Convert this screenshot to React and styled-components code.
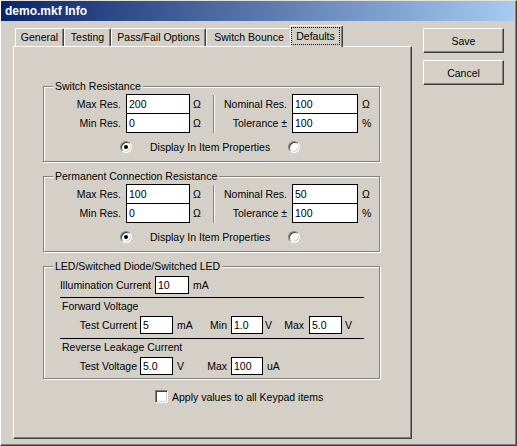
import React from "react";
import styled, { createGlobalStyle } from "styled-components";

const GlobalStyle = createGlobalStyle`
  html, body {
    margin: 0;
    padding: 0;
    background: #d4d0c8;
  }
  body {
    font-family: "Liberation Sans", Arial, sans-serif;
    font-size: 10.5px;
    color: #000;
  }
`;

const Window = styled.div`
  box-sizing: border-box;
  width: 517px;
  height: 446px;
  background: #d4d0c8;
  border-top: 1px solid #e4e2dc;
  border-left: 1px solid #fff;
  border-right: 1px solid #404040;
  border-bottom: 1px solid #404040;
  box-shadow: inset -1px -1px 0 #808080;
  padding-right: 2px;
  display: flex;
  flex-direction: column;
`;

const TitleBar = styled.div`
  height: 20px;
  display: flex;
  align-items: center;
  padding-left: 4px;
  background: linear-gradient(to right, #0a246a, #a6caf0);
  color: #fff;
  font-weight: bold;
  font-size: 12px;
`;

const Body = styled.div`
  display: flex;
  align-items: flex-start;
  padding: 4px 0 0 12px;
`;

const TabControl = styled.div`
  display: flex;
  flex-direction: column;
  width: 399px;
`;

const TabStrip = styled.div`
  display: flex;
  align-items: flex-end;
  height: 21px;
  padding-left: 2px;
`;

const Tab = styled.div`
  box-sizing: border-box;
  position: relative;
  width: ${(p) => p.$w}px;
  height: ${(p) => (p.$active ? 22 : 18)}px;
  margin: ${(p) => (p.$active ? "0 -2px -1px -2px" : "0")};
  padding: ${(p) => (p.$active ? "1px 1px 2px 0" : "0 0 1px 0")};
  z-index: ${(p) => (p.$active ? 1 : 0)};
  display: flex;
  align-items: center;
  justify-content: center;
  background: #d4d0c8;
  border-left: 1px solid #fff;
  border-top: 1px solid #fff;
  border-right: 1px solid #404040;
  border-radius: 2px 2px 0 0;
  box-shadow: inset -1px 0 0 #808080;
  white-space: nowrap;
`;

const FocusRing = styled.span`
  flex: 1;
  align-self: stretch;
  display: flex;
  align-items: center;
  justify-content: center;
  border: 1px dotted #000;
  margin-right: 1px;
`;

const Panel = styled.div`
  box-sizing: border-box;
  width: 399px;
  height: 393px;
  border-left: 1px solid #fff;
  border-top: 1px solid #fff;
  border-right: 1px solid #404040;
  border-bottom: 1px solid #404040;
  box-shadow: inset -1px -1px 0 #808080;
  padding: 39px 0 0 29px;
`;

const Group = styled.div`
  box-sizing: border-box;
  position: relative;
  width: 337px;
  height: ${(p) => p.$h}px;
  border: 1px solid #808080;
  box-shadow: inset 1px 1px 0 #fff, 1px 1px 0 #fff;

  & + & {
    margin-top: 14px;
  }
`;

const GroupTitle = styled.span`
  position: absolute;
  top: -7px;
  left: 9px;
  padding: 0 2px;
  line-height: 13px;
  background: #d4d0c8;
  white-space: nowrap;
`;

const ResGrid = styled.div`
  display: grid;
  grid-template-columns: 82px 64px 23px 2px 77px 66px 1fr;
  grid-template-rows: 19px 20px;
  padding-top: 7px;
`;

const Label = styled.span`
  box-sizing: border-box;
  width: ${(p) => (p.$w ? `${p.$w}px` : "auto")};
  flex: none;
  text-align: right;
  padding-right: ${(p) => p.$pad ?? 5}px;
  white-space: nowrap;
  align-self: center;
`;

const Unit = styled.span`
  box-sizing: border-box;
  width: ${(p) => (p.$w ? `${p.$w}px` : "auto")};
  flex: none;
  padding-left: ${(p) => p.$pad ?? 3}px;
  white-space: nowrap;
  align-self: center;
`;

const TextBox = styled.input`
  box-sizing: border-box;
  width: ${(p) => (p.$w ? `${p.$w}px` : "100%")};
  height: ${(p) => p.$h ?? 20}px;
  flex: none;
  margin: 0;
  padding: 0 0 0 2px;
  border: 1px solid #000;
  background: #fff;
  font: inherit;
  color: #000;
  outline: none;
  align-self: start;
`;

const VSeparator = styled.div`
  grid-column: 4;
  grid-row: 1 / span 2;
  margin-top: 1px;
  height: 38px;
  border-left: 1px solid #808080;
  border-right: 1px solid #fff;
  box-sizing: border-box;
`;

const RadioRow = styled.div`
  display: flex;
  align-items: center;
  gap: 18px;
  height: 13px;
  margin-top: 7px;
  padding-left: 76px;
`;

const Radio = styled.span`
  box-sizing: border-box;
  position: relative;
  width: 12px;
  height: 12px;
  border-radius: 50%;
  border: 1px solid;
  border-color: #808080 #fff #fff #808080;
  background: #fff;
  box-shadow: inset 1px 1px 0 #404040, inset -1px -1px 0 #d4d0c8;

  &::after {
    content: "";
    display: ${(p) => (p.$checked ? "block" : "none")};
    position: absolute;
    left: 3px;
    top: 3px;
    width: 4px;
    height: 4px;
    border-radius: 50%;
    background: #000;
  }
`;

const LedBody = styled.div`
  display: flex;
  flex-direction: column;
  padding-top: 9px;
`;

const FieldRow = styled.div`
  display: flex;
  align-items: center;
  height: 18px;
  margin-top: ${(p) => p.$mt ?? 0}px;
`;

const Rule = styled.div`
  height: 1px;
  background: #000;
  margin: ${(p) => p.$mt}px 15px 0 16px;
`;

const Heading = styled.div`
  line-height: 13px;
  margin-top: 2px;
  padding-left: 18px;
`;

const ApplyRow = styled.label`
  display: flex;
  align-items: center;
  gap: 4px;
  margin-top: 11px;
  padding-left: 112px;
`;

const CheckBox = styled.span`
  box-sizing: border-box;
  width: 13px;
  height: 13px;
  border: 1px solid;
  border-color: #808080 #fff #fff #808080;
  background: #fff;
  box-shadow: inset 1px 1px 0 #404040, inset -1px -1px 0 #d4d0c8;
`;

const ButtonColumn = styled.div`
  display: flex;
  flex-direction: column;
  gap: 7px;
  margin: 3px 0 0 11px;
`;

const Button = styled.button`
  box-sizing: border-box;
  width: 81px;
  height: 25px;
  padding: 0;
  background: #d4d0c8;
  border-left: 1px solid #fff;
  border-top: 1px solid #fff;
  border-right: 1px solid #404040;
  border-bottom: 1px solid #404040;
  box-shadow: inset -1px -1px 0 #808080;
  font: inherit;
  color: #000;
`;

const tabs = [
  { name: "General", w: 49 },
  { name: "Testing", w: 47 },
  { name: "Pass/Fail Options", w: 95 },
  { name: "Switch Bounce", w: 86 },
  { name: "Defaults", w: 53, active: true },
];

function ResistanceGroup({ title, max, min, nominal, tolerance }) {
  return (
    <Group $h={76}>
      <GroupTitle>{title}</GroupTitle>
      <ResGrid>
        <Label>Max Res.</Label>
        <TextBox readOnly defaultValue={max} />
        <Unit>Ω</Unit>
        <VSeparator />
        <Label>Nominal Res.</Label>
        <TextBox readOnly defaultValue={nominal} />
        <Unit $pad={4}>Ω</Unit>
        <Label style={{ gridColumn: 1 }}>Min Res.</Label>
        <TextBox readOnly defaultValue={min} />
        <Unit>Ω</Unit>
        <Label style={{ gridColumn: 5 }}>Tolerance ±</Label>
        <TextBox readOnly defaultValue={tolerance} />
        <Unit $pad={4}>%</Unit>
      </ResGrid>
      <RadioRow>
        <Radio $checked />
        <span>Display In Item Properties</span>
        <Radio />
      </RadioRow>
    </Group>
  );
}

export default function App() {
  return (
    <>
      <GlobalStyle />
      <Window>
        <TitleBar>demo.mkf Info</TitleBar>
        <Body>
          <TabControl>
            <TabStrip>
              {tabs.map((t) => (
                <Tab key={t.name} $w={t.w} $active={t.active}>
                  {t.active ? <FocusRing>{t.name}</FocusRing> : t.name}
                </Tab>
              ))}
            </TabStrip>
            <Panel>
              <ResistanceGroup
                title="Switch Resistance"
                max="200"
                min="0"
                nominal="100"
                tolerance="100"
              />
              <ResistanceGroup
                title="Permanent Connection Resistance"
                max="100"
                min="0"
                nominal="50"
                tolerance="100"
              />
              <Group $h={113}>
                <GroupTitle>LED/Switched Diode/Switched LED</GroupTitle>
                <LedBody>
                  <FieldRow>
                    <Label $w={111} $pad={4}>Illumination Current</Label>
                    <TextBox readOnly defaultValue="10" $w={34} $h={18} />
                    <Unit $pad={4}>mA</Unit>
                  </FieldRow>
                  <Rule $mt={3} />
                  <Heading>Forward Voltage</Heading>
                  <FieldRow $mt={3}>
                    <Label $w={96} $pad={3}>Test Current</Label>
                    <TextBox readOnly defaultValue="5" $w={33} $h={18} />
                    <Unit $w={24} $pad={4}>mA</Unit>
                    <Label $w={34} $pad={4}>Min</Label>
                    <TextBox readOnly defaultValue="1.0" $w={32} $h={18} />
                    <Unit $w={20} $pad={2}>V</Unit>
                    <Label $w={26} $pad={5}>Max</Label>
                    <TextBox readOnly defaultValue="5.0" $w={33} $h={18} />
                    <Unit $pad={3}>V</Unit>
                  </FieldRow>
                  <Rule $mt={4} />
                  <Heading>Reverse Leakage Current</Heading>
                  <FieldRow $mt={3}>
                    <Label $w={96} $pad={3}>Test Voltage</Label>
                    <TextBox readOnly defaultValue="5.0" $w={33} $h={18} />
                    <Unit $w={24} $pad={4}>V</Unit>
                    <Label $w={34} $pad={4}>Max</Label>
                    <TextBox readOnly defaultValue="100" $w={32} $h={18} />
                    <Unit $pad={4}>uA</Unit>
                  </FieldRow>
                </LedBody>
              </Group>
              <ApplyRow>
                <CheckBox />
                <span>Apply values to all Keypad items</span>
              </ApplyRow>
            </Panel>
          </TabControl>
          <ButtonColumn>
            <Button>Save</Button>
            <Button>Cancel</Button>
          </ButtonColumn>
        </Body>
      </Window>
    </>
  );
}
